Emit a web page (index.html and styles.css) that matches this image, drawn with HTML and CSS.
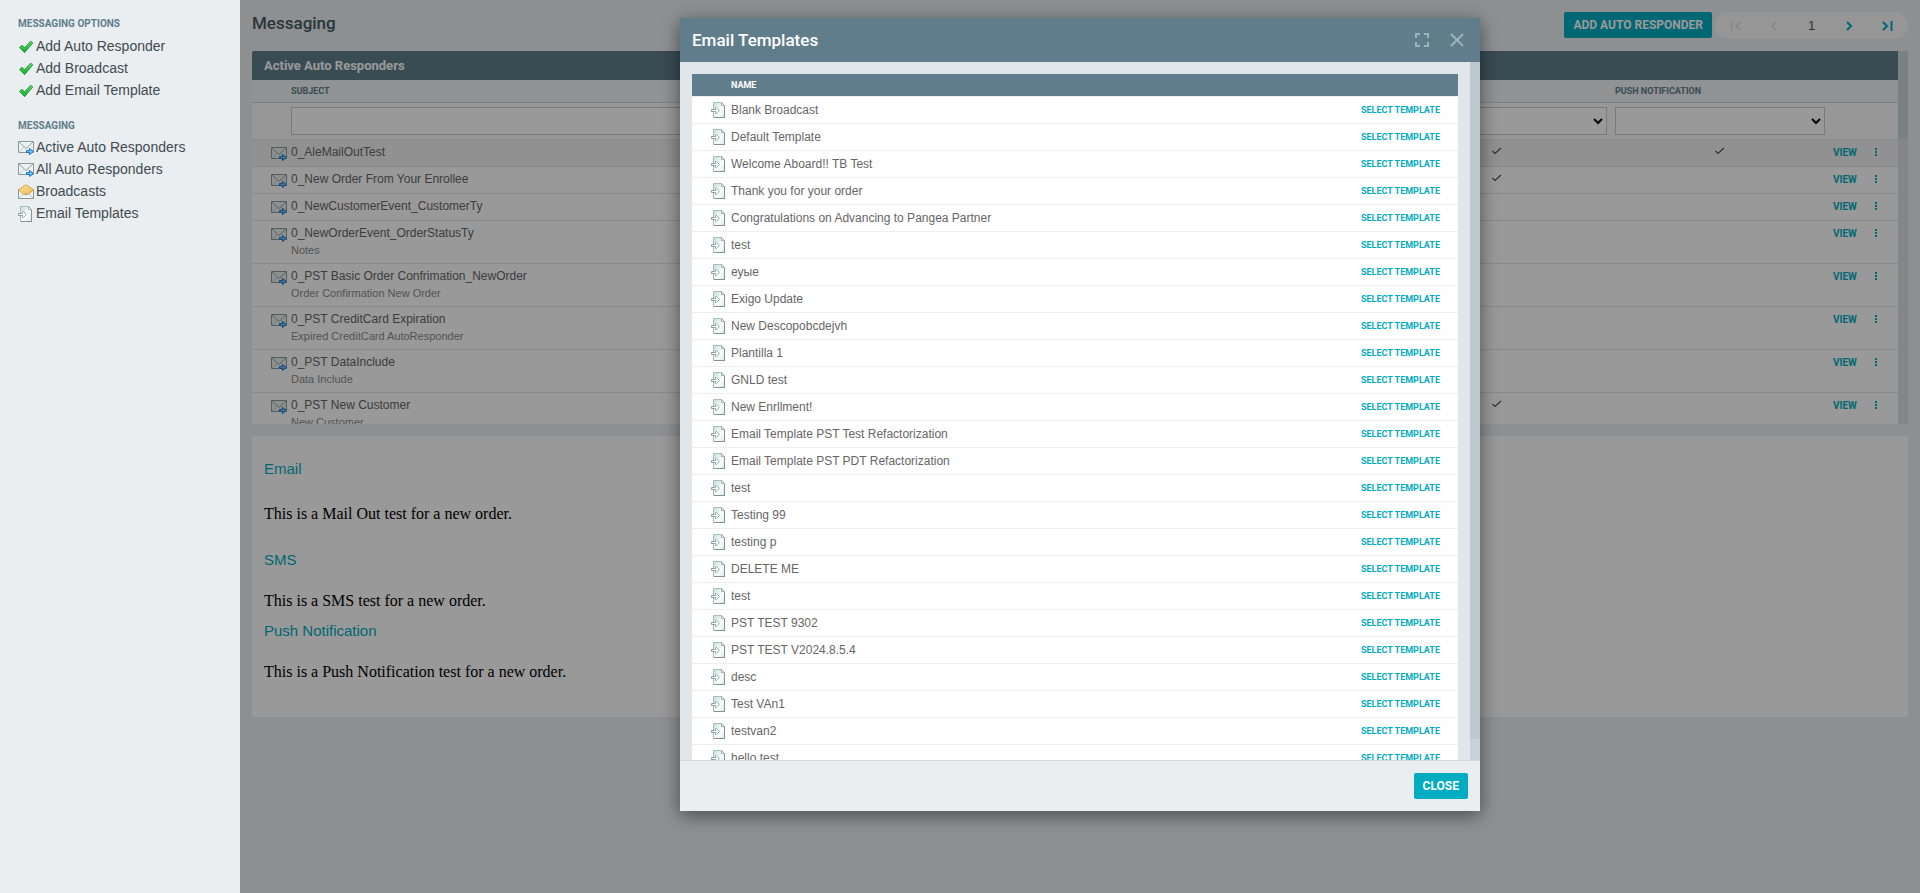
FILE: index.html
```html
<!DOCTYPE html>
<html lang="en">
<head>
<meta charset="utf-8">
<title>Messaging</title>
<link rel="stylesheet" href="styles.css">
</head>
<body>
<svg class="sprite" aria-hidden="true">
  <defs>
    <linearGradient id="paper" x1="0" y1="0" x2="1" y2="1"><stop offset="0" stop-color="#c3dede"/><stop offset=".6" stop-color="#fbfdfd"/><stop offset="1" stop-color="#d6e9e8"/></linearGradient>
    <linearGradient id="leaf" x1="0" y1="0" x2="0" y2="1"><stop offset="0" stop-color="#5fdc5f"/><stop offset="1" stop-color="#14a832"/></linearGradient>
    <linearGradient id="gold" x1="0" y1="0" x2="1" y2="1"><stop offset="0" stop-color="#fbe3a0"/><stop offset="1" stop-color="#efbd55"/></linearGradient>
  </defs>
  <symbol id="tick" viewBox="0 0 16 16"><path d="M1.500 8.500 4 6.200l2.600 2.600 6.100-6.600 2.100 1.700-8.200 9.800z" fill="url(#leaf)" stroke="#14902c" stroke-width=".8"/></symbol>
  <symbol id="mail" viewBox="0 0 16 16"><path d="M.5 1.500h15v11H.5z" fill="#e9f2f1" stroke="#8a9b99"/><path d="m1 12 5-4.700M15 12l-5-4.700" fill="none" stroke="#c3d0ce"/><path d="m1 2 7 6.500L15 2" fill="none" stroke="#94a5a3"/><path d="M8.500 10.500h3v-2l4 3-4 3v-2h-3z" fill="#6cc2ff" stroke="#1f74cc"/></symbol>
  <symbol id="open" viewBox="0 0 16 16"><path d="M.5 5.500v9h15v-9L8 11z" fill="#f1f7f6" stroke="#869896"/><path d="m1 14 4.500-4.500M15 14l-4.500-4.500" stroke="#bccac8"/><path d="M.6 5.500 8 .8l7.400 4.700L11.500 10h-7z" fill="url(#gold)" stroke="#d3a85a"/></symbol>
  <symbol id="page" viewBox="0 0 16 16"><path d="M2.500.5h8l3 3v12h-11z" fill="url(#paper)" stroke="#a9bfbd"/><path d="M3 15.500h11M13.500 4v12" stroke="#7f9593"/><path d="M10.500.5v3h3z" fill="#fff" stroke="#9db3b1"/><path d="M.5 7.500h3v2h-3z" fill="#f3f8f8" stroke="#8a9f9d"/><path d="M4.500 5.500h1l3 3-3 3h-1z" fill="#f6fafa" stroke="#9db0ae"/><path d="M3 8h2v1H3z" fill="#f6fafa"/></symbol>
  <symbol id="check" viewBox="0 0 12 12"><path d="m1.500 6 2.500 2.500 6-5.500" fill="none" stroke="#4a4a55" stroke-width="1.100"/></symbol>
  <symbol id="dots" viewBox="0 0 4 10"><path d="M1 1h2v2H1zM1 4h2v2H1zM1 7h2v2H1z" fill="#00acc1"/></symbol>
</svg>
<div class="app">
  <nav class="sidebar">
    <h2>MESSAGING OPTIONS</h2>
    <a href="#"><svg><use href="#tick"/></svg>Add Auto Responder</a>
    <a href="#"><svg><use href="#tick"/></svg>Add Broadcast</a>
    <a href="#"><svg><use href="#tick"/></svg>Add Email Template</a>
    <h2>MESSAGING</h2>
    <a href="#"><svg><use href="#mail"/></svg>Active Auto Responders</a>
    <a href="#"><svg><use href="#mail"/></svg>All Auto Responders</a>
    <a href="#"><svg><use href="#open"/></svg>Broadcasts</a>
    <a href="#"><svg><use href="#page"/></svg>Email Templates</a>
  </nav>
  <main class="main">
    <header class="toolbar">
      <h1>Messaging</h1>
      <button class="btn" type="button">ADD AUTO RESPONDER</button>
      <div class="pager">
        <button type="button" disabled aria-label="First page"><svg viewBox="0 0 12 12"><path d="M1.500 1v10M10 2 6 6l4 4"/></svg></button>
        <button type="button" disabled aria-label="Previous page"><svg viewBox="0 0 12 12"><path d="M8 2 4 6l4 4"/></svg></button>
        <span>1</span>
        <button type="button" aria-label="Next page"><svg viewBox="0 0 12 12"><path d="m4 2 4 4-4 4"/></svg></button>
        <button type="button" aria-label="Last page"><svg viewBox="0 0 12 12"><path d="m2 2 4 4-4 4M10.500 1v10"/></svg></button>
      </div>
    </header>
    <section class="panel">
      <div class="panel-view">
        <h2>Active Auto Responders</h2>
        <table class="grid">
          <colgroup><col class="c-icon"><col><col class="c-mid"><col class="c-push"><col class="c-act"></colgroup>
          <thead>
            <tr><th></th><th>SUBJECT</th><th></th><th>PUSH NOTIFICATION</th><th></th></tr>
            <tr class="filter"><td></td><td><input type="text" aria-label="Subject"></td><td><select aria-label="Filter"><option></option></select></td><td><select aria-label="Push notification"><option></option></select></td><td></td></tr>
          </thead>
          <tbody>
            <tr class="current"><td><svg class="ico"><use href="#mail"/></svg></td><td>0_AleMailOutTest</td><td class="mark"><svg><use href="#check"/></svg></td><td class="mark"><svg><use href="#check"/></svg></td><td class="act"><div><a href="#">VIEW</a><button type="button" aria-label="More"><svg><use href="#dots"/></svg></button></div></td></tr>
            <tr><td><svg class="ico"><use href="#mail"/></svg></td><td>0_New Order From Your Enrollee</td><td class="mark"><svg><use href="#check"/></svg></td><td></td><td class="act"><div><a href="#">VIEW</a><button type="button" aria-label="More"><svg><use href="#dots"/></svg></button></div></td></tr>
            <tr><td><svg class="ico"><use href="#mail"/></svg></td><td>0_NewCustomerEvent_CustomerTy</td><td></td><td></td><td class="act"><div><a href="#">VIEW</a><button type="button" aria-label="More"><svg><use href="#dots"/></svg></button></div></td></tr>
            <tr><td><svg class="ico"><use href="#mail"/></svg></td><td>0_NewOrderEvent_OrderStatusTy<small>Notes</small></td><td></td><td></td><td class="act"><div><a href="#">VIEW</a><button type="button" aria-label="More"><svg><use href="#dots"/></svg></button></div></td></tr>
            <tr><td><svg class="ico"><use href="#mail"/></svg></td><td>0_PST Basic Order Confrimation_NewOrder<small>Order Confirmation New Order</small></td><td></td><td></td><td class="act"><div><a href="#">VIEW</a><button type="button" aria-label="More"><svg><use href="#dots"/></svg></button></div></td></tr>
            <tr><td><svg class="ico"><use href="#mail"/></svg></td><td>0_PST CreditCard Expiration<small>Expired CreditCard AutoResponder</small></td><td></td><td></td><td class="act"><div><a href="#">VIEW</a><button type="button" aria-label="More"><svg><use href="#dots"/></svg></button></div></td></tr>
            <tr><td><svg class="ico"><use href="#mail"/></svg></td><td>0_PST DataInclude<small>Data Include</small></td><td></td><td></td><td class="act"><div><a href="#">VIEW</a><button type="button" aria-label="More"><svg><use href="#dots"/></svg></button></div></td></tr>
            <tr><td><svg class="ico"><use href="#mail"/></svg></td><td>0_PST New Customer<small>New Customer</small></td><td class="mark"><svg><use href="#check"/></svg></td><td></td><td class="act"><div><a href="#">VIEW</a><button type="button" aria-label="More"><svg><use href="#dots"/></svg></button></div></td></tr>
          </tbody>
        </table>
      </div>
      <div class="track"><div class="thumb thumb-short"></div></div>
    </section>
    <section class="detail">
      <h3>Email</h3>
      <p class="roomy">This is a Mail Out test for a new order.</p>
      <h3>SMS</h3>
      <p>This is a SMS test for a new order.</p>
      <h3>Push Notification</h3>
      <p>This is a Push Notification test for a new order.</p>
    </section>
  </main>
</div>
<div class="overlay"></div>
<div class="modal" role="dialog" aria-labelledby="modal-title">
  <header class="modal-head">
    <h2 id="modal-title">Email Templates</h2>
    <button type="button" aria-label="Full screen"><svg viewBox="0 0 14 14"><path d="M1 5V1h4M9 1h4v4M13 9v4H9M5 13H1V9"/></svg></button>
    <button type="button" aria-label="Close"><svg viewBox="0 0 14 14"><path d="m1 1 12 12M13 1 1 13"/></svg></button>
  </header>
  <div class="modal-body">
    <div class="modal-view">
      <table class="list">
        <colgroup><col class="c-icon"><col><col class="c-select"></colgroup>
        <thead><tr><th></th><th>NAME</th><th></th></tr></thead>
        <tbody>
          <tr><td><svg class="ico"><use href="#page"/></svg></td><td>Blank Broadcast</td><td><a href="#">SELECT TEMPLATE</a></td></tr>
          <tr><td><svg class="ico"><use href="#page"/></svg></td><td>Default Template</td><td><a href="#">SELECT TEMPLATE</a></td></tr>
          <tr><td><svg class="ico"><use href="#page"/></svg></td><td>Welcome Aboard!! TB Test</td><td><a href="#">SELECT TEMPLATE</a></td></tr>
          <tr><td><svg class="ico"><use href="#page"/></svg></td><td>Thank you for your order</td><td><a href="#">SELECT TEMPLATE</a></td></tr>
          <tr><td><svg class="ico"><use href="#page"/></svg></td><td>Congratulations on Advancing to Pangea Partner</td><td><a href="#">SELECT TEMPLATE</a></td></tr>
          <tr><td><svg class="ico"><use href="#page"/></svg></td><td>test</td><td><a href="#">SELECT TEMPLATE</a></td></tr>
          <tr><td><svg class="ico"><use href="#page"/></svg></td><td>еуые</td><td><a href="#">SELECT TEMPLATE</a></td></tr>
          <tr><td><svg class="ico"><use href="#page"/></svg></td><td>Exigo Update</td><td><a href="#">SELECT TEMPLATE</a></td></tr>
          <tr><td><svg class="ico"><use href="#page"/></svg></td><td>New Descopobcdejvh</td><td><a href="#">SELECT TEMPLATE</a></td></tr>
          <tr><td><svg class="ico"><use href="#page"/></svg></td><td>Plantilla 1</td><td><a href="#">SELECT TEMPLATE</a></td></tr>
          <tr><td><svg class="ico"><use href="#page"/></svg></td><td>GNLD test</td><td><a href="#">SELECT TEMPLATE</a></td></tr>
          <tr><td><svg class="ico"><use href="#page"/></svg></td><td>New Enrllment!</td><td><a href="#">SELECT TEMPLATE</a></td></tr>
          <tr><td><svg class="ico"><use href="#page"/></svg></td><td>Email Template PST Test Refactorization</td><td><a href="#">SELECT TEMPLATE</a></td></tr>
          <tr><td><svg class="ico"><use href="#page"/></svg></td><td>Email Template PST PDT Refactorization</td><td><a href="#">SELECT TEMPLATE</a></td></tr>
          <tr><td><svg class="ico"><use href="#page"/></svg></td><td>test</td><td><a href="#">SELECT TEMPLATE</a></td></tr>
          <tr><td><svg class="ico"><use href="#page"/></svg></td><td>Testing 99</td><td><a href="#">SELECT TEMPLATE</a></td></tr>
          <tr><td><svg class="ico"><use href="#page"/></svg></td><td>testing p</td><td><a href="#">SELECT TEMPLATE</a></td></tr>
          <tr><td><svg class="ico"><use href="#page"/></svg></td><td>DELETE ME</td><td><a href="#">SELECT TEMPLATE</a></td></tr>
          <tr><td><svg class="ico"><use href="#page"/></svg></td><td>test</td><td><a href="#">SELECT TEMPLATE</a></td></tr>
          <tr><td><svg class="ico"><use href="#page"/></svg></td><td>PST TEST 9302</td><td><a href="#">SELECT TEMPLATE</a></td></tr>
          <tr><td><svg class="ico"><use href="#page"/></svg></td><td>PST TEST V2024.8.5.4</td><td><a href="#">SELECT TEMPLATE</a></td></tr>
          <tr><td><svg class="ico"><use href="#page"/></svg></td><td>desc</td><td><a href="#">SELECT TEMPLATE</a></td></tr>
          <tr><td><svg class="ico"><use href="#page"/></svg></td><td>Test VAn1</td><td><a href="#">SELECT TEMPLATE</a></td></tr>
          <tr><td><svg class="ico"><use href="#page"/></svg></td><td>testvan2</td><td><a href="#">SELECT TEMPLATE</a></td></tr>
          <tr><td><svg class="ico"><use href="#page"/></svg></td><td>hello test</td><td><a href="#">SELECT TEMPLATE</a></td></tr>
        </tbody>
      </table>
    </div>
    <div class="track"><div class="thumb thumb-long"></div></div>
  </div>
  <footer class="modal-foot"><button class="btn" type="button">CLOSE</button></footer>
</div>
</body>
</html>
```
FILE: styles.css
```css
* { box-sizing: border-box; }
body { margin: 0; font-family: "Liberation Sans", Arial, sans-serif; font-size: 12px; color: #666; background: #edeff2; overflow: hidden; }
h1, h2, h3, p { margin: 0; }
a { text-decoration: none; color: #00acc1; }
button { font-family: inherit; border: 0; padding: 0; background: none; cursor: pointer; }
svg { display: block; flex: none; }
table { width: 100%; border-collapse: collapse; table-layout: fixed; }
th { text-align: left; font-family: Roboto, sans-serif; }
.sprite { position: absolute; width: 0; height: 0; }
.app { display: flex; height: 100vh; }

.sidebar { width: 240px; flex: none; padding: 16px 18px; background: #eaeef1; }
.sidebar h2 { font: 700 10px/15px Roboto, sans-serif; color: #607d8b; margin-bottom: 4px; }
.sidebar a { display: flex; align-items: center; gap: 2px; height: 22px; font-size: 14px; color: #414b50; }
.sidebar a svg { width: 16px; height: 16px; margin-top: 2px; }
.sidebar a + h2 { margin: 17px 0 3px; }

.main { flex: 1; min-width: 0; padding: 12px; }
.toolbar { display: flex; align-items: flex-start; gap: 3px; height: 27px; margin-bottom: 12px; }
.toolbar h1 { flex: 1; font: 500 17px/23px Roboto, sans-serif; color: #455a64; }
.btn { height: 26px; padding: 0 9px; border-radius: 2px; background: #00acc1; color: #fff; font: 700 12px/26px Roboto, sans-serif; }
.pager { display: flex; align-items: center; width: 193px; height: 27px; padding: 0 2px; border-radius: 14px; background: #fafafa; font-size: 13px; color: #555; }
.pager > * { flex: 1; display: flex; justify-content: center; }
.pager svg { width: 12px; height: 12px; fill: none; stroke: #00acc1; stroke-width: 2; }
.pager button:disabled svg { stroke: #e4e4e4; }

.panel { display: flex; height: calc(100vh - 520px); background: #fff; border-radius: 2px 2px 0 0; overflow: hidden; }
.panel-view { flex: 1; min-width: 0; overflow: hidden; }
.panel-view h2 { padding: 0 12px; background: #607d8b; color: #fff; font: 700 13px/29px Roboto, sans-serif; }
.track { width: 10px; flex: none; background: #dae1e6; }
.thumb { background: #cdd6db; }
.thumb-short { height: 88px; }
.c-icon { width: 39px; }
.c-mid { width: 228px; }
.c-push { width: 218px; }
.c-act { width: 69px; }
.grid th { height: 22px; padding: 0 4px; font-size: 9px; color: #607d8b; background: #f0f3f5; border-bottom: 1px solid #cfd8dc; }
.grid th:nth-child(2), .grid td:nth-child(2) { padding-left: 0; }
.grid .filter td { height: 37px; padding: 4px; background: #fcfcfc; vertical-align: middle; }
.grid .filter td:nth-child(2) { padding-left: 0; }
.filter input, .filter select { display: block; width: 100%; height: 28px; border: 1px solid #ccc; background: #fff; border-radius: 0; }
.grid td { padding: 5px 4px 7px; line-height: 14px; vertical-align: top; border-bottom: 1px solid #e6e6e6; }
.grid small { display: block; margin-top: 2px; padding-top: 2px; line-height: 12px; font-size: 11px; color: #8c8c8c; }
.grid .current td { background: #f2f2f2; }
.ico { width: 16px; height: 16px; }
.grid td:first-child { padding: 6px 0 0 19px; }
.grid .mark svg { width: 12px; height: 12px; margin: 0 auto; }
.grid .act div { display: flex; align-items: center; gap: 15px; height: 15px; margin-bottom: -1px; }
.grid .act a { width: 26px; font: 700 10px/15px Roboto, sans-serif; }
.grid .act svg { width: 4px; height: 10px; }

.detail { margin-top: 12px; padding: 23px 12px 25px; background: #fff; border-radius: 2px; }
.detail h3 { font-size: 15px; font-weight: 400; line-height: 20px; color: #00acc1; }
.detail p { margin: 21px 0 10px; font: 16px/20px "Liberation Serif", serif; color: #000; }
.detail .roomy { margin: 25px 0 26px; }

.overlay { position: fixed; inset: 0 0 0 240px; background: rgba(0, 0, 0, .4); }
.modal { position: fixed; top: 18px; left: calc(50% - 280px); width: 800px; height: calc(100vh - 100px); display: flex; flex-direction: column; background: #e0e6e9; box-shadow: 0 4px 18px rgba(0, 0, 0, .5); }
.modal-head { display: flex; align-items: center; gap: 21px; height: 44px; padding: 0 16px 0 12px; background: #607d8b; }
.modal-head h2 { flex: 1; color: #fff; font: 500 17px/24px Roboto, sans-serif; }
.modal-head svg { width: 14px; height: 14px; fill: none; stroke: #a0b1ba; stroke-width: 2; }
.modal-body { display: flex; flex: 1; min-height: 0; }
.modal-view { flex: 1; min-width: 0; padding: 12px 12px 0; overflow: hidden; }
.modal-body .track { background: #c9d1d8; }
.modal-body .thumb { background: #bdc8cf; }
.thumb-long { height: 97%; }
.list { background: #fff; }
.c-select { width: 110px; }
.list th { height: 22px; padding: 0; font-size: 9px; color: #fff; background: #607d8b; }
.list td { height: 27px; padding: 0; border-top: 1px solid #eee; vertical-align: middle; }
.list td:first-child { padding: 0 0 0 19px; }
.list td:last-child { padding-right: 18px; text-align: right; }
.list a { display: block; font: 700 9px/14px Roboto, sans-serif; }
.modal-foot { display: flex; align-items: center; justify-content: flex-end; height: 51px; padding: 0 12px; background: #eaeef1; border-top: 1px solid #d3dade; }
```
